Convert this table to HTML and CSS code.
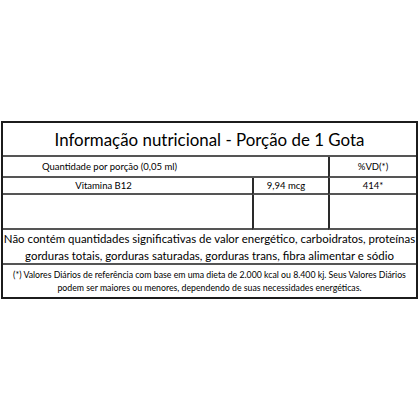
FILE: index.html
```html
<!DOCTYPE html>
<html lang="pt">
<head>
<meta charset="utf-8">
<link rel="stylesheet" href="styles.css">
</head>
<body>
<div class="panel">
  <div class="title">Informação nutricional - Porção de 1 Gota</div>
  <div class="grid">
    <div class="cell c1 span2 head">Quantidade por porção (0,05 ml)</div>
    <div class="cell c3 head">%VD(*)</div>
    <div class="cell c1 row">Vitamina B12</div>
    <div class="cell c2 row">9,94 mcg</div>
    <div class="cell c3 row">414*</div>
    <div class="cell c1 empty"></div>
    <div class="cell c2 empty"></div>
    <div class="cell c3 empty"></div>
  </div>
  <div class="note">Não contém quantidades significativas de valor energético, carboidratos, proteínas<br>gorduras totais, gorduras saturadas, gorduras trans, fibra alimentar e sódio</div>
  <div class="foot">(*) Valores Diários de referência com base em uma dieta de 2.000 kcal ou 8.400 kj. Seus Valores Diários<br>podem ser maiores ou menores, dependendo de suas necessidades energéticas.</div>
</div>
</body>
</html>
```
FILE: styles.css
```css
html, body {
  margin: 0;
  padding: 0;
  background: #fff;
}
body {
  font-family: "Lato", "Open Sans", sans-serif;
  color: #000;
}
.panel {
  margin: 121px 0 0 1px;
  width: 413px;
  border: 2px solid #1c1c1c;
  display: flex;
  flex-direction: column;
}
.title {
  height: 32px;
  border-bottom: 2px solid #555;
  display: flex;
  align-items: center;
  justify-content: center;
  font-size: 16.9px;
  white-space: nowrap;
}
.grid {
  display: grid;
  grid-template-columns: 249px 76px 1fr;
}
.cell {
  border-bottom: 2px solid #555;
  display: flex;
  align-items: center;
  justify-content: center;
  font-size: 9.5px;
  white-space: nowrap;
}
.span2 { grid-column: 1 / 3; }
.c1 { padding-right: 48px; }
.span2.c1 { padding-right: 112px; }
.c2, .c3 { border-left: 2px solid #2a2a2a; }
.c2 { padding-right: 10px; }
.head { height: 19px; }
.row { height: 15px; }
.empty { height: 33px; }
.note {
  height: 33px;
  border-bottom: 2px solid #555;
  display: flex;
  align-items: center;
  justify-content: center;
  text-align: center;
  font-size: 11.45px;
  line-height: 17px;
  white-space: nowrap;
}
.foot {
  height: 32px;
  display: flex;
  align-items: center;
  justify-content: center;
  text-align: center;
  font-size: 8.75px;
  line-height: 13px;
  white-space: nowrap;
}
```
